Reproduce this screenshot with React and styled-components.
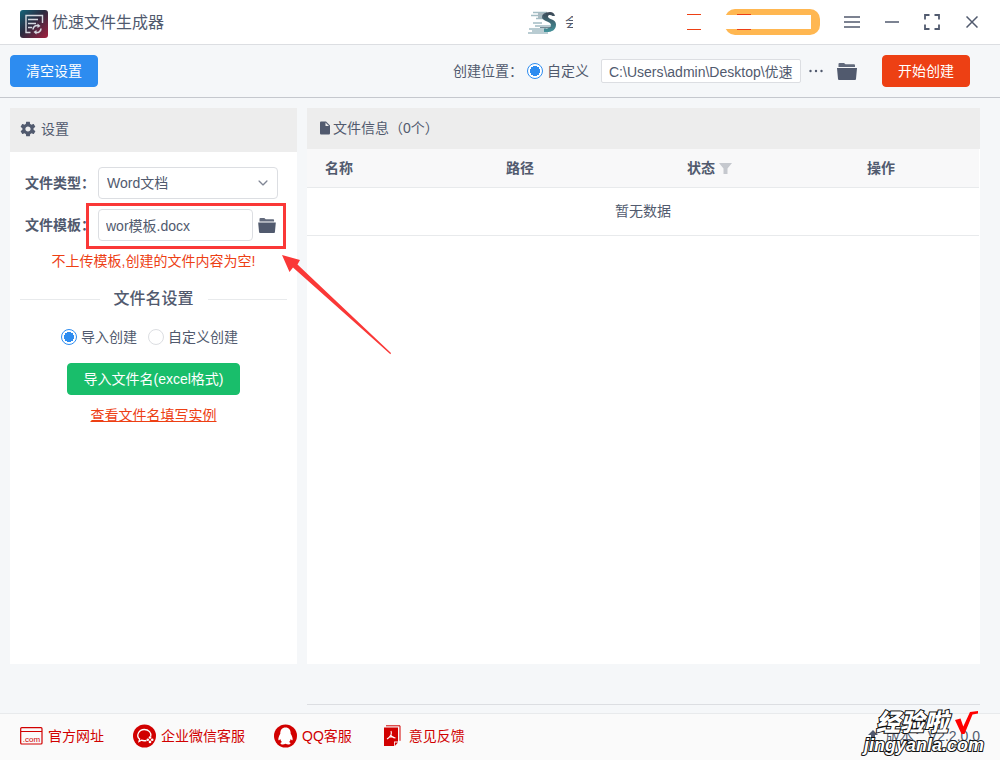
import { useState } from "react";
import styled, { createGlobalStyle } from "styled-components";
import { IoMdSettings, IoMdDocument, IoIosArrowDown } from "react-icons/io";

const GlobalStyle = createGlobalStyle`
  * {
    box-sizing: border-box;
  }
  body {
    margin: 0;
    background: #f5f7f9;
    color: #515a6e;
    font-family: "Liberation Sans", "Noto Sans CJK SC", sans-serif;
    font-size: 14px;
    line-height: 20px;
  }
  button, input, select {
    font: inherit;
    color: inherit;
  }
  svg {
    display: block;
    flex: none;
  }
`;

const Page = styled.div`
  min-height: 100vh;
  display: flex;
  flex-direction: column;
`;

const TitleBar = styled.header`
  height: 45px;
  padding: 0 8px 0 20px;
  display: flex;
  align-items: center;
  background: #fff;
  border-bottom: 1px solid #dcdee2;
`;

const Logo = styled.svg`
  margin-top: 4px;
`;

const Title = styled.h1`
  margin: 0 auto 0 4px;
  padding-top: 2px;
  font-size: 16px;
  font-weight: 400;
  line-height: 24px;
`;

const Member = styled.span`
  width: 8px;
  height: 12px;
  margin: 0 114px 0 8px;
  overflow: hidden;
  white-space: nowrap;
  line-height: 12px;
`;

const Dashes = styled.span`
  width: 14px;
  height: 16px;
  border-top: 1px solid #ed4014;
  border-bottom: 1px solid #ed4014;
`;

const Pill = styled.div`
  width: 95px;
  height: 26px;
  margin: 0 12px 0 24px;
  display: flex;
  align-items: center;
  background: #ffb751;
  border-radius: 10px;
`;

const PillCover = styled.div`
  width: 86px;
  padding-left: 12px;
  display: flex;
  background: linear-gradient(#fff, #fff) center / 100% 14px no-repeat;
`;

const IconButton = styled.button`
  width: ${(p) => p.$width || 40}px;
  height: ${(p) => p.$height || 40}px;
  padding: 0;
  display: flex;
  flex: none;
  align-items: center;
  justify-content: center;
  background: none;
  border: none;
  cursor: pointer;
`;

const Toolbar = styled.div`
  height: 53px;
  padding: 0 30px 0 10px;
  display: flex;
  align-items: center;
  border-bottom: 1px solid #c5c8ce;
`;

const Button = styled.button`
  height: 32px;
  padding: 0 15px;
  color: #fff;
  background: ${(p) => p.$color};
  border: 1px solid ${(p) => p.$color};
  border-radius: 4px;
  white-space: nowrap;
  cursor: pointer;
`;

const Location = styled.div`
  margin: 0 11px 0 auto;
  display: flex;
  align-items: center;
`;

const LocationLabel = styled.span`
  margin-right: 4px;
`;

const RadioLabel = styled.label`
  display: flex;
  align-items: center;
  gap: 4px;
`;

const Radio = styled.input.attrs({ type: "radio" })`
  appearance: none;
  width: 16px;
  height: 16px;
  margin: 0;
  background: #fff;
  border: 1px solid #dcdee2;
  border-radius: 50%;
  &:checked {
    background: radial-gradient(circle, #2d8cf0 5px, #fff 5px);
    border-color: #2d8cf0;
  }
`;

const TextInput = styled.input`
  min-width: 0;
  width: ${(p) => p.$width || "auto"};
  flex: ${(p) => (p.$width ? "none" : 1)};
  height: ${(p) => p.$height || 32}px;
  padding: 0 7px;
  background: #fff;
  border: 1px solid #dcdee2;
  border-radius: ${(p) => (p.$height ? 2 : 4)}px;
`;

const PathInput = styled(TextInput)`
  margin: 0 8px 0 12px;
`;

const Main = styled.main`
  flex: 1;
  padding: 10px 20px 8px 10px;
  display: grid;
  grid-template-columns: 287px 1fr;
  gap: 10px;
`;

const SettingsPanel = styled.section`
  margin-bottom: 41px;
  background: #fff;
`;

const PanelHead = styled.h2`
  height: ${(p) => p.$height}px;
  margin: 0;
  padding: 0 ${(p) => p.$pad}px 2px;
  display: flex;
  align-items: center;
  gap: ${(p) => p.$gap || 0}px;
  background: #ededed;
  font-size: 14px;
  font-weight: 400;
`;

const Form = styled.div`
  padding: 15px 19px 0 15px;
  display: flex;
  flex-direction: column;
  gap: 10px;
`;

const FormRow = styled.div`
  position: relative;
  display: flex;
  align-items: center;
`;

const FormLabel = styled.label`
  width: 73px;
  flex: none;
  font-weight: 700;
  white-space: nowrap;
`;

const SelectBox = styled.div`
  position: relative;
  flex: 1;
  svg {
    position: absolute;
    right: 8px;
    top: 9px;
    color: #808695;
    pointer-events: none;
  }
`;

const Select = styled.select`
  appearance: none;
  width: 100%;
  height: 32px;
  padding: 0 8px;
  background: #fff;
  border: 1px solid #dcdee2;
  border-radius: 4px;
`;

const FileField = styled.div`
  flex: 1;
  min-width: 0;
  display: flex;
  align-items: center;
  gap: 3px;
`;

const Highlight = styled.div`
  position: absolute;
  inset: -6px -8px -8px 61px;
  border: 3px solid #fa3837;
  pointer-events: none;
`;

const Arrow = styled.svg`
  position: absolute;
  left: 257px;
  top: 46px;
  pointer-events: none;
`;

const Warning = styled.p`
  margin: 10px 0 0;
  color: #ed4014;
  text-align: center;
`;

const Divider = styled.h3`
  margin: 16px 10px 0;
  display: flex;
  align-items: center;
  gap: 14px;
  font-size: 16px;
  font-weight: 500;
  line-height: 24px;
  &::before,
  &::after {
    content: "";
    flex: 1;
    height: 1px;
    background: #e8eaec;
  }
`;

const RadioGroup = styled.div`
  margin-top: 16px;
  padding-right: 8px;
  display: flex;
  justify-content: center;
  gap: 11px;
`;

const ImportBlock = styled.div`
  margin-top: 16px;
  display: flex;
  flex-direction: column;
  align-items: center;
  gap: 10px;
`;

const ExampleLink = styled.a`
  color: #ed4014;
`;

const FilesColumn = styled.div`
  padding-bottom: 40px;
  display: flex;
  border-bottom: 1px solid #dcdee2;
`;

const FilesPanel = styled.section`
  flex: 1;
  background: #fff;
`;

const Table = styled.table`
  width: 100%;
  border-collapse: separate;
  border-spacing: 0;
  border-right: 1px solid #fff;
  table-layout: fixed;
`;

const Th = styled.th`
  width: ${(p) => p.$width || "auto"};
  height: 39px;
  padding: 0 18px;
  background: #f8f8f9;
  border-bottom: 1px solid #e8eaec;
  text-align: left;
`;

const ThContent = styled.span`
  display: flex;
  align-items: center;
  gap: 4px;
`;

const EmptyCell = styled.td`
  height: 48px;
  padding: 0 0 2px;
  border-bottom: 1px solid #e8eaec;
  text-align: center;
`;

const Footer = styled.footer`
  position: relative;
  height: 47px;
  padding: 0 20px 2px;
  display: flex;
  align-items: center;
  gap: 29px;
  background: #fafafa;
  border-top: 1px solid #e8eaec;
`;

const FooterLink = styled.a`
  display: flex;
  align-items: center;
  gap: 5px;
  color: #d10000;
  text-decoration: none;
`;

const Version = styled.span`
  margin-left: auto;
  display: flex;
  align-items: center;
  gap: 8px;
`;

const Watermark = styled.div`
  position: absolute;
  right: 16px;
  bottom: 5px;
  display: flex;
  flex-direction: column;
  align-items: flex-end;
  color: #fff;
  font-weight: 900;
  font-style: italic;
  -webkit-text-stroke: 2px #111;
  paint-order: stroke fill;
`;

const WatermarkTop = styled.div`
  padding-right: 6px;
  display: flex;
  align-items: center;
  gap: 7px;
  font-size: 24px;
  line-height: 24px;
`;

const WatermarkUrl = styled.div`
  font-size: 18px;
  line-height: 20px;
`;

const FolderIcon = ({ width = 20, height = 17 }) => (
  <svg width={width} height={height} viewBox="0 0 20 17" fill="#515a6e">
    <path d="M1.500 4V1q0-1 1-1H7l1.500 1.300H17q1 0 1 1V4z" opacity=".9" />
    <path d="M0 5h20l-1 11q-.1 1-1 1H2q-.9 0-1-1z" />
  </svg>
);

const AppLogo = () => (
  <Logo width="28" height="28" viewBox="0 0 28 28" fill="none">
    <defs>
      <linearGradient id="logo" x1="0" y1="0" x2="1" y2="1">
        <stop offset="0" stopColor="#15667b" />
        <stop offset=".45" stopColor="#2b2c40" />
        <stop offset="1" stopColor="#a5203f" />
      </linearGradient>
    </defs>
    <rect width="28" height="28" rx="3" fill="url(#logo)" />
    <g stroke="#d5d8df" strokeWidth="1.400">
      <path d="M10.500 22.500H6V5.500h16.500V13" />
      <path d="M8 9.500h10M8 13.500h8M8 17.500h4" />
      <path d="M13 19.500a4 4 0 0 1 5.500-3.700M21 18.500a4 4 0 0 1-5.500 3.700" strokeWidth="1.600" />
    </g>
    <path d="M17.500 13.500l3 2.500-3 2zM16.500 20l-3 2 3 2.500z" fill="#d5d8df" />
  </Logo>
);

const SpeedLogo = () => (
  <svg width="29" height="24" viewBox="0 0 29 24" fill="none">
    <defs>
      <linearGradient id="speed" x1="0" y1="0" x2="0" y2="1">
        <stop offset="0" stopColor="#3d4553" />
        <stop offset="1" stopColor="#43949c" />
      </linearGradient>
    </defs>
    <path d="M5 2.500h14M3 5.500h14M8 8.500h8M5 13h9M7 16h16M1 19h17M4 21h19M0 23h20" stroke="#a3bcc3" strokeWidth="1.300" />
    <path d="M27 6q-1-4-5-4-8 .3-8 5c0 4.500 9 4 9 8.200 0 2.600-3 3.300-7 3.300v3.500c8 .6 12-2 12-7.500 0-5.500-8-5-8-8 0-2 3-2 4.500-.5z" fill="url(#speed)" />
    <path d="M10 4h8M10 7h6M12 17.500h12" stroke="#526b78" strokeWidth=".8" />
  </svg>
);

const DotComIcon = () => (
  <svg width="23" height="18" viewBox="0 0 23 18" fill="none">
    <rect x=".7" y=".7" width="21.300" height="16.300" rx="1" stroke="#d10000" strokeWidth="1.200" />
    <path d="M1 4.500h21" stroke="#d10000" />
    <text x="11.500" y="14.500" fill="#d10000" fontSize="8" textAnchor="middle">.com</text>
  </svg>
);

const WeComIcon = () => (
  <svg width="23" height="24" viewBox="0 0 23 24" fill="none">
    <circle cx="11.500" cy="12" r="11.500" fill="#d10000" />
    <path d="M13.500 16.500q-3 .6-5-.3L6 17.500l.6-2.400C2.500 11.500 6 5.500 11.200 5.500c4.600 0 7.500 3.500 6.500 7" stroke="#fff" strokeWidth="1.300" />
    <g fill="#fff">
      <circle cx="17" cy="13.500" r="1.300" />
      <circle cx="14.800" cy="15.700" r="1.300" />
      <circle cx="17" cy="17.900" r="1.300" />
      <circle cx="19.200" cy="15.700" r="1.300" />
    </g>
  </svg>
);

const QQIcon = () => (
  <svg width="23" height="24" viewBox="0 0 23 24">
    <circle cx="11.500" cy="12" r="11.500" fill="#d10000" />
    <path d="M11.500 3.500c-3.500 0-5.300 2.500-5.200 6.200-1.200 2-2.200 4.300-1.900 6.300.5.900 1.300-.1 1.900-.9.200 1.200.8 2.200 1.600 3-1.200.5-1.500 1.100-1.300 1.700.6 1.100 3.500.9 4.900 0 1.400.9 4.300 1.100 4.900 0 .2-.6-.1-1.200-1.300-1.700.8-.8 1.400-1.800 1.600-3 .6.8 1.400 1.800 1.900.9.300-2-.7-4.300-1.900-6.300.1-3.700-1.700-6.200-5.200-6.200z" fill="#fff" />
  </svg>
);

const FeedbackIcon = () => (
  <svg width="23" height="22" viewBox="0 0 23 22" fill="none">
    <path d="M5 .8h14v15" stroke="#d10000" strokeWidth="1" />
    <path d="M3 2.500h14v14h-4V21H3z" fill="#d10000" />
    <path d="M13.800 21v-3.500H17z" fill="#d10000" />
    <path d="M10 6q.8 2-.1 4-1.300 2.500-3.900 4M9.900 10.200q.9 2.100 4.600 2.800M7.500 12.500q2.500-1 5-.6" stroke="#fff" strokeWidth="1.100" />
  </svg>
);

const columns = [
  { title: "名称", width: "181px" },
  { title: "路径", width: "181px" },
  { title: "状态", width: "180px", filter: true },
  { title: "操作" },
];

const App = () => {
  const [mode, setMode] = useState("import");

  return (
    <Page>
      <GlobalStyle />
      <TitleBar>
        <AppLogo />
        <Title>优速文件生成器</Title>
        <SpeedLogo />
        <Member>会</Member>
        <Dashes />
        <Pill>
          <PillCover>
            <Dashes />
          </PillCover>
        </Pill>
        <IconButton aria-label="菜单">
          <svg width="16" height="12" viewBox="0 0 16 12" stroke="#515a6e" strokeWidth="1.500">
            <path d="M0 1h16M0 6h16M0 11h16" />
          </svg>
        </IconButton>
        <IconButton aria-label="最小化">
          <svg width="14" height="2" viewBox="0 0 14 2" stroke="#515a6e" strokeWidth="1.500">
            <path d="M0 1h14" />
          </svg>
        </IconButton>
        <IconButton aria-label="全屏">
          <svg width="16" height="16" viewBox="0 0 16 16" fill="none" stroke="#515a6e" strokeWidth="1.800">
            <path d="M1 5.500V1h4.500M10.500 1H15v4.500M15 10.500V15h-4.500M5.500 15H1v-4.500" />
          </svg>
        </IconButton>
        <IconButton aria-label="关闭">
          <svg width="12" height="12" viewBox="0 0 12 12" stroke="#515a6e" strokeWidth="1.500">
            <path d="M.5.500l11 11M11.500.500l-11 11" />
          </svg>
        </IconButton>
      </TitleBar>

      <Toolbar>
        <Button $color="#2d8cf0">清空设置</Button>
        <Location>
          <LocationLabel>创建位置：</LocationLabel>
          <RadioLabel>
            <Radio name="location" defaultChecked />
            自定义
          </RadioLabel>
          <PathInput $width="200px" $height={24} aria-label="创建位置" defaultValue="C:\Users\admin\Desktop\优速" />
          <IconButton $width={14} $height={24} aria-label="更多">
            <svg width="14" height="4" viewBox="0 0 14 4" fill="#515a6e">
              <circle cx="1.500" cy="2" r="1.200" />
              <circle cx="7" cy="2" r="1.200" />
              <circle cx="12.500" cy="2" r="1.200" />
            </svg>
          </IconButton>
          <IconButton $width={48} $height={24} aria-label="打开文件夹">
            <FolderIcon />
          </IconButton>
        </Location>
        <Button $color="#ed4014">开始创建</Button>
      </Toolbar>

      <Main>
        <SettingsPanel>
          <PanelHead $height={44} $pad={9} $gap={4}>
            <IoMdSettings size={18} />
            设置
          </PanelHead>
          <Form>
            <FormRow>
              <FormLabel htmlFor="type">文件类型：</FormLabel>
              <SelectBox>
                <Select id="type">
                  <option>Word文档</option>
                </Select>
                <IoIosArrowDown size={14} />
              </SelectBox>
            </FormRow>
            <FormRow>
              <FormLabel htmlFor="template">文件模板：</FormLabel>
              <FileField>
                <TextInput id="template" defaultValue="wor模板.docx" />
                <IconButton $width={22} $height={32} aria-label="选择模板">
                  <FolderIcon width={18} height={15} />
                </IconButton>
              </FileField>
              <Highlight />
              <Arrow width="110" height="100" viewBox="0 0 110 100" fill="#fa3837">
                <path d="M0 0l18 5-2.500 4.500L109 98l-.6 1.200L11 12.500 7.500 17z" />
              </Arrow>
            </FormRow>
          </Form>
          <Warning>不上传模板,创建的文件内容为空!</Warning>
          <Divider>文件名设置</Divider>
          <RadioGroup>
            <RadioLabel>
              <Radio name="mode" checked={mode === "import"} onChange={() => setMode("import")} />
              导入创建
            </RadioLabel>
            <RadioLabel>
              <Radio name="mode" checked={mode === "custom"} onChange={() => setMode("custom")} />
              自定义创建
            </RadioLabel>
          </RadioGroup>
          <ImportBlock>
            <Button $color="#19be6b">导入文件名(excel格式)</Button>
            <ExampleLink href="#example">查看文件名填写实例</ExampleLink>
          </ImportBlock>
        </SettingsPanel>

        <FilesColumn>
          <FilesPanel>
            <PanelHead $height={41} $pad={10}>
              <IoMdDocument size={16} />
              文件信息（0个）
            </PanelHead>
            <Table>
              <thead>
                <tr>
                  {columns.map((col) => (
                    <Th key={col.title} $width={col.width}>
                      <ThContent>
                        {col.title}
                        {col.filter && (
                          <svg width="13" height="11" viewBox="0 0 13 11" fill="#c5c8ce">
                            <path d="M0 0h13L8.500 5.500V11h-4V5.500z" />
                          </svg>
                        )}
                      </ThContent>
                    </Th>
                  ))}
                </tr>
              </thead>
              <tbody>
                <tr>
                  <EmptyCell colSpan={4}>暂无数据</EmptyCell>
                </tr>
              </tbody>
            </Table>
          </FilesPanel>
        </FilesColumn>
      </Main>

      <Footer>
        <FooterLink href="#site">
          <DotComIcon />
          官方网址
        </FooterLink>
        <FooterLink href="#wecom">
          <WeComIcon />
          企业微信客服
        </FooterLink>
        <FooterLink href="#qq">
          <QQIcon />
          QQ客服
        </FooterLink>
        <FooterLink href="#feedback">
          <FeedbackIcon />
          意见反馈
        </FooterLink>
        <Version>
          <svg width="10" height="12" viewBox="0 0 10 12" fill="#515a6e">
            <path d="M5 0l5 5H7v7H3V5H0z" />
          </svg>
          版本：V2.2.0.0
        </Version>
        <Watermark>
          <WatermarkTop>
            经验啦
            <svg width="23" height="24" viewBox="0 0 23 24" fill="#f00">
              <path d="M0 9l5.500-1.500 2.800 8L15 1 23 0v2.500l-5.500 1L9.500 23H6.500z" />
            </svg>
          </WatermarkTop>
          <WatermarkUrl>jingyanla.com</WatermarkUrl>
        </Watermark>
      </Footer>
    </Page>
  );
};

export default App;
